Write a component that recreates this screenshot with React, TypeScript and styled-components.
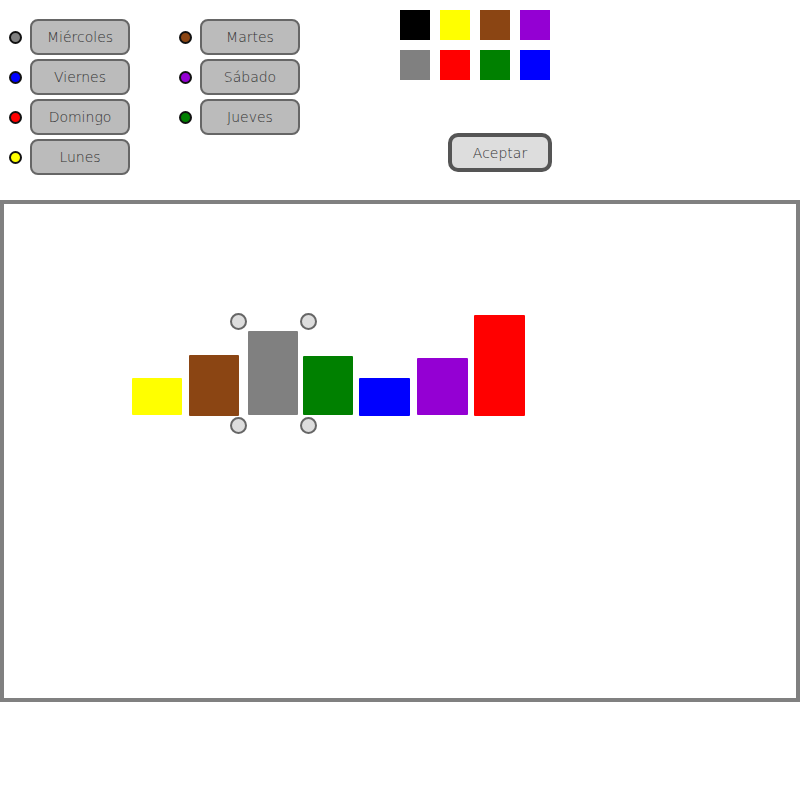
import styled, { createGlobalStyle } from 'styled-components';

const GlobalStyle = createGlobalStyle`
  html, body {
    margin: 0;
    padding: 0;
    background: #ffffff;
    font-family: "DejaVu Sans", Verdana, sans-serif;
  }
`;

interface Day {
  name: string;
  color: string;
}

const leftDays: Day[] = [
  { name: 'Miércoles', color: '#808080' },
  { name: 'Viernes', color: '#0000ff' },
  { name: 'Domingo', color: '#ff0000' },
  { name: 'Lunes', color: '#ffff00' },
];

const rightDays: Day[] = [
  { name: 'Martes', color: '#8b4513' },
  { name: 'Sábado', color: '#9400d3' },
  { name: 'Jueves', color: '#008000' },
];

const swatches = ['#000000', '#ffff00', '#8b4513', '#9400d3', '#808080', '#ff0000', '#008000', '#0000ff'];

// page coordinates of each bar, shifted into the canvas below
const bars = [
  { x: 132, y: 378, w: 50, h: 37, color: '#ffff00' },
  { x: 189, y: 355, w: 50, h: 61, color: '#8b4513' },
  { x: 248, y: 331, w: 50, h: 84, color: '#808080' },
  { x: 303, y: 356, w: 50, h: 59, color: '#008000' },
  { x: 359, y: 378, w: 51, h: 38, color: '#0000ff' },
  { x: 417, y: 358, w: 51, h: 57, color: '#9400d3' },
  { x: 474, y: 315, w: 51, h: 101, color: '#ff0000' },
];

const handles = [
  { x: 238, y: 321 },
  { x: 308, y: 321 },
  { x: 238, y: 425 },
  { x: 308, y: 425 },
];

const CANVAS_X = 4;
const CANVAS_Y = 204;

function DayColumn({ days }: { days: Day[] }) {
  return (
    <Column>
      {days.map((d) => (
        <Row key={d.name}>
          <Dot $color={d.color} />
          <DayButton>{d.name}</DayButton>
        </Row>
      ))}
    </Column>
  );
}

function App() {
  return (
    <>
      <GlobalStyle />
      <Page>
        <TopBar>
          <DayColumn days={leftDays} />
          <DayColumn days={rightDays} />
          <RightBlock>
            <SwatchGrid>
              {swatches.map((c) => (
                <Swatch key={c} $color={c} />
              ))}
            </SwatchGrid>
            <AcceptButton>Aceptar</AcceptButton>
          </RightBlock>
        </TopBar>
        <Canvas>
          {bars.map((b) => (
            <Bar
              key={b.color}
              $x={b.x - CANVAS_X}
              $y={b.y - CANVAS_Y}
              $w={b.w}
              $h={b.h}
              $color={b.color}
            />
          ))}
          {handles.map((h) => (
            <Handle key={`${h.x}-${h.y}`} $x={h.x - CANVAS_X} $y={h.y - CANVAS_Y} />
          ))}
        </Canvas>
      </Page>
    </>
  );
}

export default App;

const Page = styled.div`
  width: 800px;
  height: 805px;
`;

const TopBar = styled.div`
  display: flex;
  height: 200px;
  box-sizing: border-box;
  padding: 19px 0 0 9px;
  gap: 49px;
`;

const Column = styled.div`
  display: flex;
  flex-direction: column;
  gap: 4px;
`;

const Row = styled.div`
  display: flex;
  align-items: center;
  gap: 8px;
`;

const Dot = styled.span<{ $color: string }>`
  flex: none;
  width: 13px;
  height: 13px;
  box-sizing: border-box;
  border-radius: 50%;
  border: 2px solid #111;
  background: ${(p) => p.$color};
`;

const DayButton = styled.button`
  flex: none;
  width: 100px;
  height: 36px;
  box-sizing: border-box;
  border: 2px solid #666;
  border-radius: 8px;
  background: #bbbbbb;
  color: #333;
  font-family: "DejaVu Sans", Verdana, sans-serif;
  font-weight: 200;
  font-size: 14px;
  padding: 0;
  cursor: pointer;
`;

const RightBlock = styled.div`
  display: flex;
  flex-direction: column;
  align-items: flex-end;
  margin-left: 51px;
  margin-top: -9px;
`;

const SwatchGrid = styled.div`
  display: grid;
  grid-template-columns: repeat(4, 30px);
  grid-auto-rows: 30px;
  gap: 10px;
  margin-right: 2px;
`;

const Swatch = styled.div<{ $color: string }>`
  background: ${(p) => p.$color};
`;

const AcceptButton = styled.button`
  margin-top: 53px;
  width: 104px;
  height: 39px;
  box-sizing: border-box;
  border: 4px solid #555;
  border-radius: 10px;
  background: #dddddd;
  color: #333;
  font-family: "DejaVu Sans", Verdana, sans-serif;
  font-weight: 200;
  font-size: 14px;
  padding: 0;
  cursor: pointer;
`;

const Canvas = styled.div`
  position: relative;
  width: 800px;
  height: 502px;
  box-sizing: border-box;
  border: 4px solid #808080;
  overflow: hidden;
`;

const Bar = styled.div<{ $x: number; $y: number; $w: number; $h: number; $color: string }>`
  position: absolute;
  left: ${(p) => p.$x}px;
  top: ${(p) => p.$y}px;
  width: ${(p) => p.$w}px;
  height: ${(p) => p.$h}px;
  background: ${(p) => p.$color};
  border-radius: 1px;
`;

const Handle = styled.div<{ $x: number; $y: number }>`
  position: absolute;
  left: ${(p) => p.$x - 8}px;
  top: ${(p) => p.$y - 8}px;
  width: 17px;
  height: 17px;
  box-sizing: border-box;
  border-radius: 50%;
  border: 2px solid #666;
  background: #dddddd;
`;
